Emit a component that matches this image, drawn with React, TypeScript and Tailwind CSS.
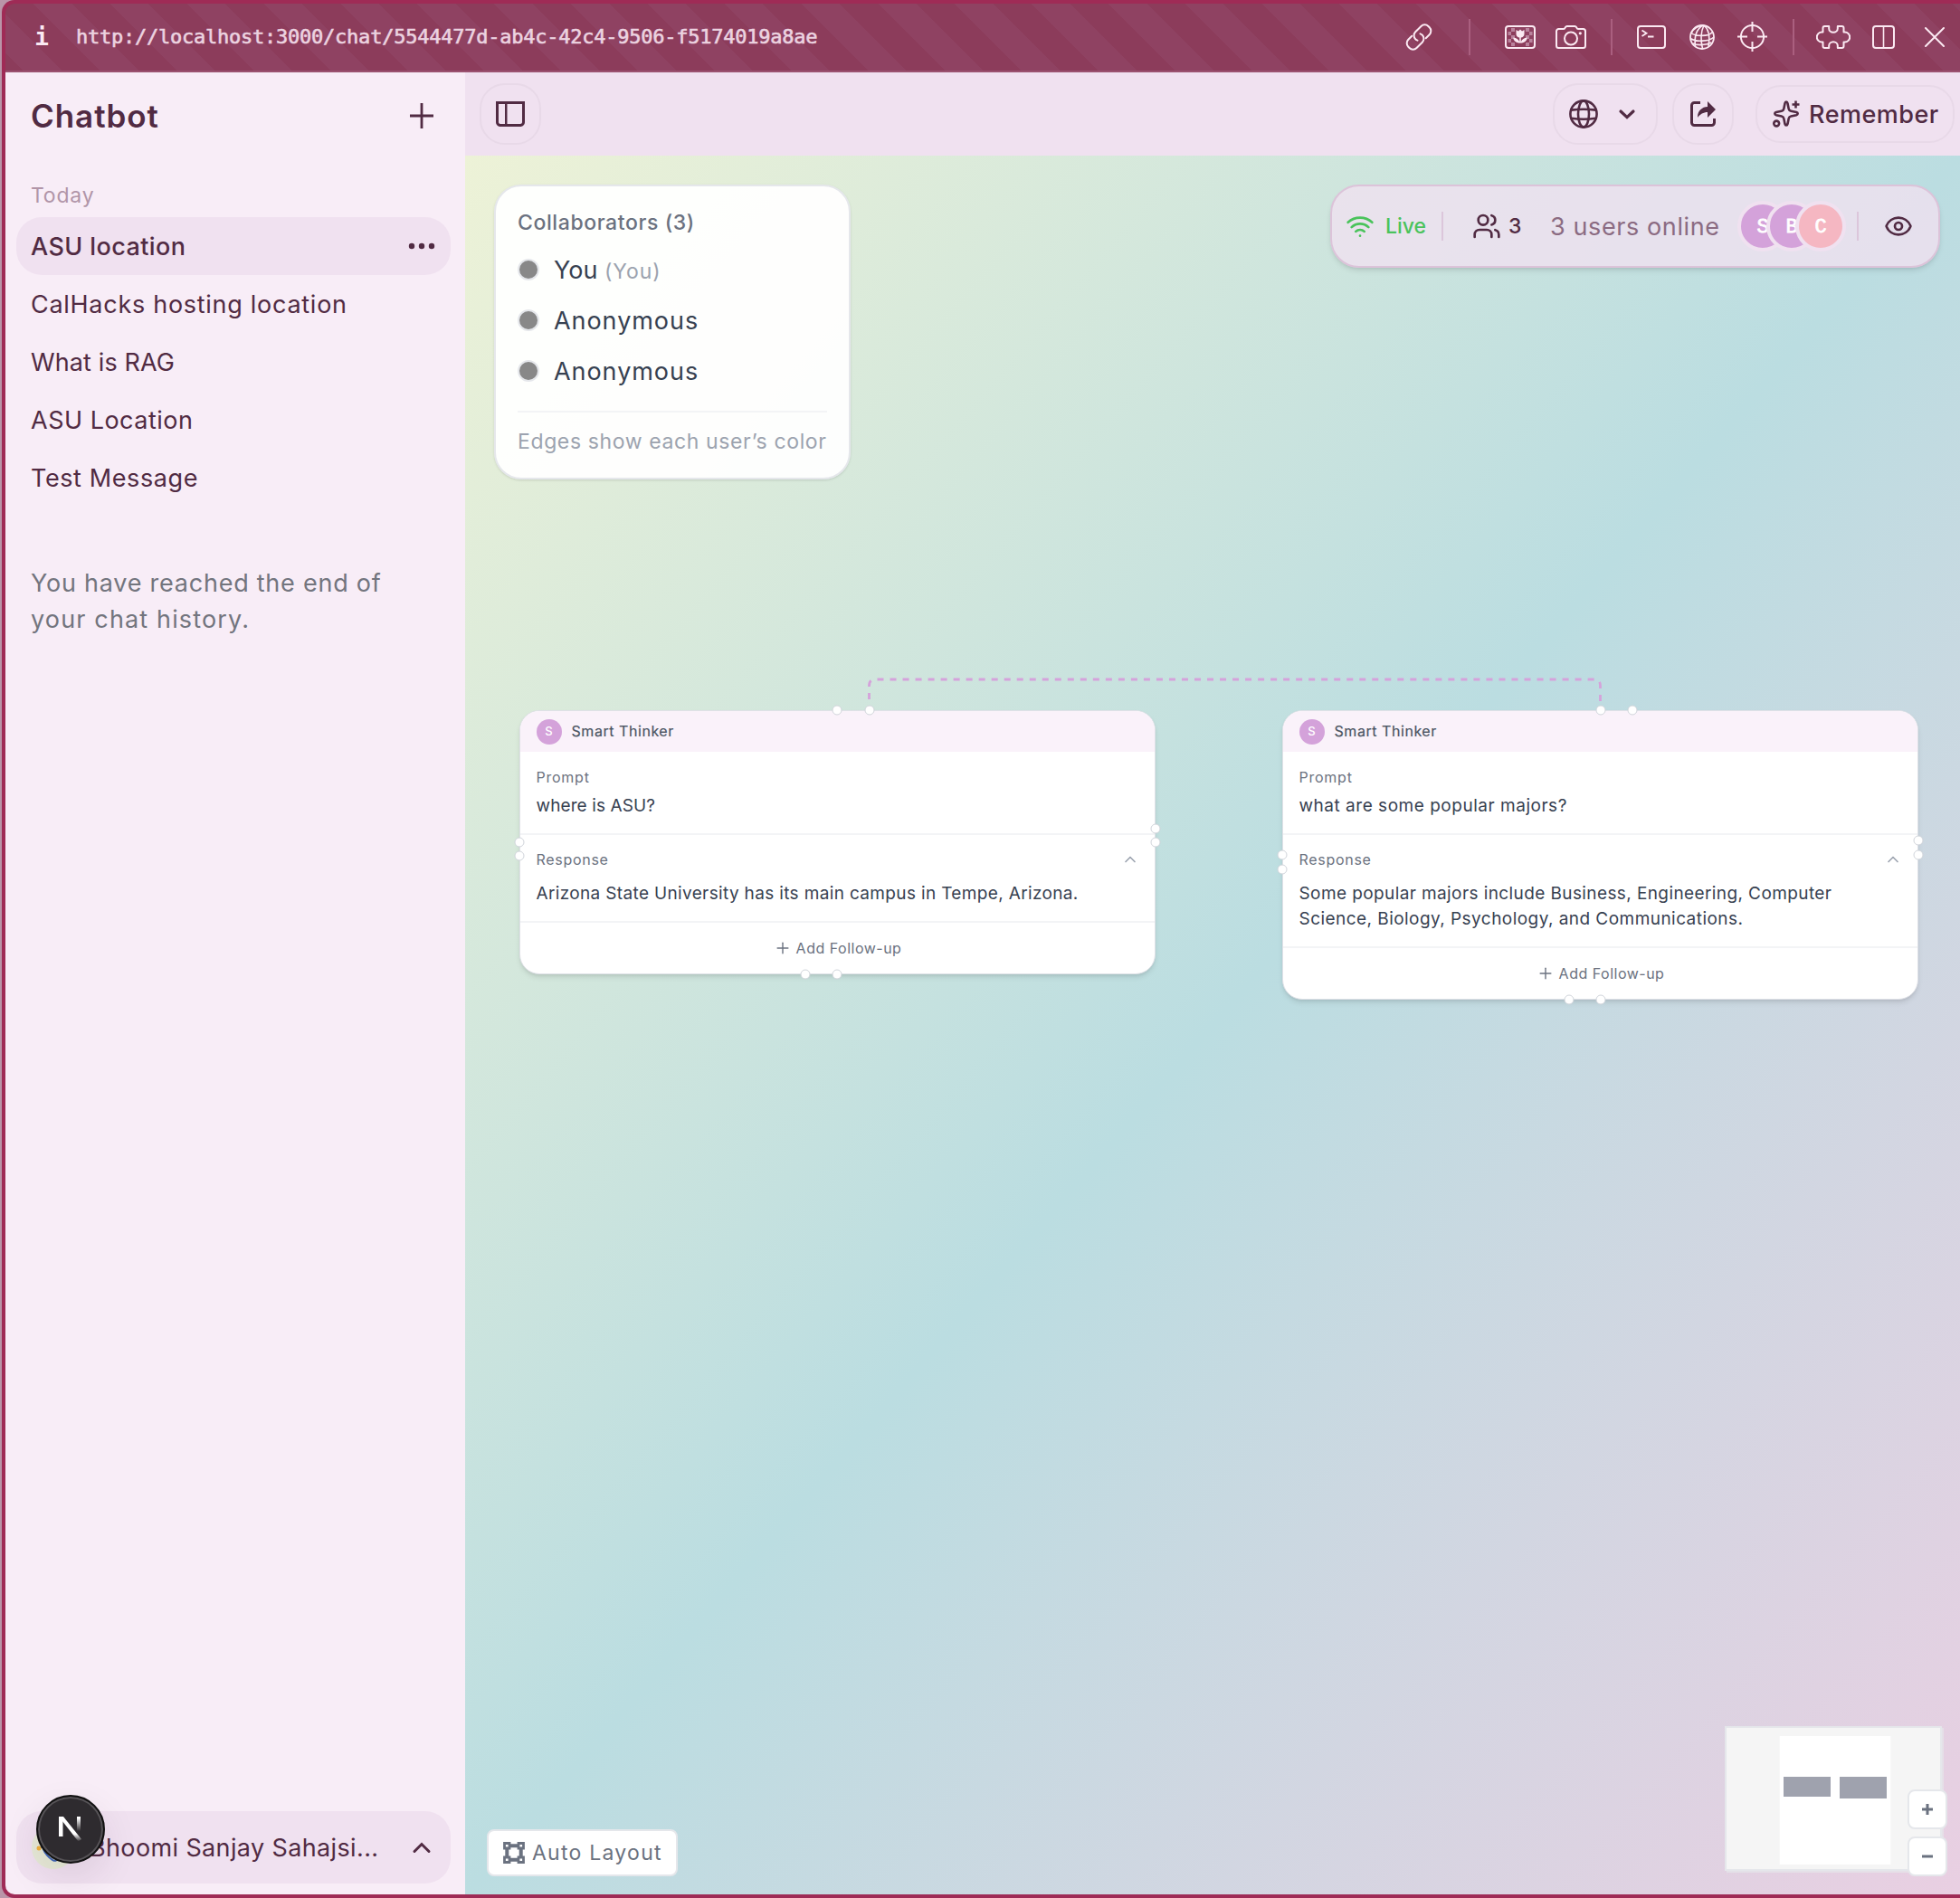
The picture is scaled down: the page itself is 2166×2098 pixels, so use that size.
import { useState } from 'react';
import type { ReactNode } from 'react';
import { ChevronUp, Eye, Plus, Users, Wifi } from 'lucide-react';

const chats = [
    { title: 'ASU location', tracking: 'tracking-[0.4px]' },
    { title: 'CalHacks hosting location', tracking: 'tracking-[0.72px]' },
    { title: 'What is RAG', tracking: 'tracking-[0.12px]' },
    { title: 'ASU Location', tracking: 'tracking-[0.5px]' },
    { title: 'Test Message', tracking: 'tracking-[0.6px]' },
];

const ToolDivider = ({ className }: { className: string }) => (
    <div className={`h-10 w-0.5 shrink-0 bg-[#aa5f7f] ${className}`}></div>
);

const BrowserBar = () => (
    <div className="flex h-[76px] shrink-0 items-center border-b-2 border-[#9b5270] bg-[repeating-linear-gradient(45deg,#8c3c5b_0px,#8c3c5b_14px,#8f4262_14px,#8f4262_44px,#8c3c5b_44px,#8c3c5b_60px)] pr-[17px] pb-px pl-[31px] text-[#fbe9f2]">
        <span className="w-[18px] text-center font-['DejaVu_Sans_Mono',monospace] text-[26px] leading-8 font-bold">i</span>
        <span className="ml-[29px] font-['DejaVu_Sans_Mono',monospace] text-[22px] leading-8 tracking-[-0.24px] whitespace-nowrap text-[#ecd3e0] [-webkit-text-stroke:0.6px_#ecd3e0]">
            http://localhost:3000/chat/5544477d-ab4c-42c4-9506-f5174019a8ae
        </span>

        {/* Link */}
        <svg className="ml-auto h-[30px] w-[30px] shrink-0" viewBox="0 0 30 30" fill="none" stroke="currentColor" strokeWidth={2} strokeLinecap="round">
            <path d="M13.5 18.6a6 6 0 0 1-2.3-1.4 5.6 5.6 0 0 1 0-7.9l6.3-6.3a5.6 5.6 0 0 1 7.9 0l1.3 1.3a5.6 5.6 0 0 1 0 7.9l-4 4" />
            <path d="M16.5 11.4a6 6 0 0 1 2.3 1.4 5.6 5.6 0 0 1 0 7.9L12.5 27a5.6 5.6 0 0 1-7.9 0l-1.3-1.3a5.6 5.6 0 0 1 0-7.9l4-4" />
        </svg>
        <ToolDivider className="ml-[40px]" />

        {/* Picture */}
        <svg className="ml-[38px] h-[26px] w-[34px] shrink-0" viewBox="0 0 34 26" fill="none">
            <path fill="#b9829c" d="M7 3h4v4H7zM3.500 7H7v4H3.500zM7 11h4v4H7zM3.500 15H7v4H3.500zM7 19h4v4H7zM23 3h4v4h-4zM27 7h3.500v4H27zM23 11h4v4h-4zM27 15h3.500v4H27zM23 19h4v4h-4z" />
            <rect x="1" y="1" width="32" height="24" rx="3" stroke="currentColor" strokeWidth={2} />
            <path fill="currentColor" d="M12.5 5l2.5 1.500L17 4.500l2 2L21.500 5v4.500c0 2.500-1.600 3.800-3.700 4v4.800c1-2.600 3.400-4.500 7-4.700-.3 3.300-2.500 5.500-6 6h-3.600c-3.500-.5-5.700-2.700-6-6 3.600.2 6 2.100 7 4.700v-4.800c-2.100-.2-3.700-1.500-3.700-4z" />
        </svg>

        {/* Camera */}
        <svg className="ml-[22px] h-[26px] w-[34px] shrink-0" viewBox="0 0 34 26" fill="none" stroke="currentColor" strokeWidth={2} strokeLinejoin="round">
            <path d="M3.500 4H9c1.200 0 1.500-1 2-2 .4-.7.9-1 1.700-1h8.600c.8 0 1.300.3 1.700 1 .5 1 .8 2 2 2h5.500A2.500 2.500 0 0 1 33 6.500v16a2.500 2.500 0 0 1-2.500 2.500h-27A2.500 2.500 0 0 1 1 22.500v-16A2.500 2.500 0 0 1 3.500 4z" />
            <circle cx="17" cy="14.5" r="7" />
            <circle cx="27.3" cy="8.8" r="1.6" fill="currentColor" stroke="none" />
        </svg>
        <ToolDivider className="ml-[27px]" />

        {/* Console */}
        <svg className="ml-[27px] h-[26px] w-[32px] shrink-0" viewBox="0 0 32 26" fill="none" stroke="currentColor" strokeWidth={2}>
            <rect x="1" y="1" width="30" height="24" rx="3" />
            <path d="M5.500 5.500l5 3.200-5 3.200M12 12.500h6.500" strokeWidth={1.8} />
        </svg>

        {/* Network */}
        <svg className="ml-[26px] h-[28px] w-[28px] shrink-0" viewBox="0 0 28 28" fill="none" stroke="currentColor" strokeWidth={1.6}>
            <circle cx="14" cy="14" r="13" strokeWidth={1.8} />
            <path d="M15 1C8 5 5 12 6.500 24M16 1c-3 6-4 15-1.500 26M16 1c5 4 7 12 5 23M16 1C10 1 4 5 2.500 9M2 9.500c4 3.500 19 4.500 23.500-1M1 15.500c6 4 21 3.500 26-1.500M3.500 21c6 2.500 15 2 21-1" />
        </svg>

        {/* Inspect */}
        <svg className="ml-[25px] h-[33px] w-[33px] shrink-0" viewBox="0 0 33 33" fill="none" stroke="currentColor" strokeWidth={2}>
            <circle cx="16.5" cy="16.5" r="12.6" />
            <path d="M16.500 0v11M16.500 22v11M0 16.500h11M22 16.500h11" />
        </svg>
        <ToolDivider className="ml-[28px]" />

        {/* Extensions */}
        <svg className="ml-[24px] h-[26px] w-[38px] shrink-0" viewBox="0 0 38 26" fill="none" stroke="currentColor" strokeWidth={2} strokeLinejoin="round">
            <path d="M9.500 1h4.700v2.500a4.800 4.300 0 0 0 9.600 0V1h4.700q2 0 2 2v4.500h1.200a5.500 5.500 0 0 1 0 11h-1.200V23q0 2-2 2h-4.700v-2.500a4.800 4.300 0 0 0-9.600 0V25H9.500q-2 0-2-2v-4.500H6.300a5.500 5.500 0 0 1 0-11h1.200V3q0-2 2-2z" />
        </svg>

        {/* Split view */}
        <svg className="ml-[24px] h-[26px] w-[25px] shrink-0" viewBox="0 0 25 26" fill="none" stroke="currentColor" strokeWidth={2}>
            <rect x="1" y="1" width="23" height="24" rx="3" />
            <path d="M12.500 1v24" strokeWidth={1.6} />
        </svg>

        {/* Close */}
        <svg className="ml-[33px] h-[22px] w-[22px] shrink-0" viewBox="0 0 22 22" fill="none" stroke="currentColor" strokeWidth={2} strokeLinecap="round">
            <path d="M1 1l20 20M21 1L1 21" />
        </svg>
    </div>
);

const Sidebar = () => {
    const [active, setActive] = useState(0);

    return (
        <aside className="flex w-[508px] shrink-0 flex-col bg-[#f8edf7] pr-4 pb-3 pl-3 text-[#512b43]">
            <div className="flex h-[96px] items-center justify-between pr-[19px] pl-4">
                <h1 className="text-[35px] leading-10 font-semibold tracking-[0.95px]">Chatbot</h1>
                <svg className="h-[28px] w-[26px]" viewBox="0 0 26 28" stroke="currentColor" strokeWidth={2.8}>
                    <path d="M13 0v28M0 14h26" />
                </svg>
            </div>

            <div className="mt-6 mb-2 flex h-8 items-center pl-4 text-[23px] tracking-[0.8px] text-[#b195a8]">Today</div>
            <nav className="flex flex-col">
                {chats.map((chat, index) => (
                    <button
                        key={index}
                        onClick={() => setActive(index)}
                        className={`flex h-16 items-center justify-between rounded-[28px] pr-4 pl-4 text-left text-[27px] ${active === index ? 'bg-[#f0e1f0] font-medium' : ''}`}
                    >
                        <span className={`pt-0.5 whitespace-nowrap ${chat.tracking}`}>{chat.title}</span>
                        {active === index && (
                            <svg className="h-8 w-8" viewBox="0 0 16 16" fill="currentColor">
                                <circle cx="2.5" cy="8" r="1.6" />
                                <circle cx="8" cy="8" r="1.6" />
                                <circle cx="13.5" cy="8" r="1.6" />
                            </svg>
                        )}
                    </button>
                ))}
            </nav>
            <p className="mt-[65px] pl-4 text-[27px] leading-[40px] whitespace-nowrap text-[#73757e]">
                <span className="tracking-[0.76px]">You have reached the end of</span><br />
                <span className="tracking-[1.15px]">your chat history.</span>
            </p>

            {/* Account */}
            <div className="relative mt-auto flex h-20 items-center rounded-[28px] bg-[#f0e1f0] pr-4 pl-[17px]">
                <div className="h-12 w-12 shrink-0 overflow-hidden rounded-full bg-[#e6ead6]">
                    <svg className="h-12 w-12" viewBox="0 0 48 48" fill="none" strokeWidth={2}>
                        <path d="M6 24h12M12 18l10 14" stroke="#3f66b5" />
                        <ellipse cx="20" cy="30" rx="11" ry="4" stroke="#3f66b5" transform="rotate(50 20 30)" />
                        <circle cx="8" cy="25" r="2.5" fill="#f0b23c" />
                    </svg>
                </div>
                <span className="ml-4 pt-0.5 text-[27px] tracking-[0.37px] whitespace-nowrap">Bhoomi Sanjay Sahajsi...</span>
                <svg className="ml-auto h-8 w-8" viewBox="0 0 32 32" fill="none" stroke="currentColor" strokeWidth={3} strokeLinecap="round">
                    <path d="M8 20.500L16 12.500l8 8" />
                </svg>

                {/* Dev tools badge */}
                <div className="absolute -top-[18px] left-[22px] flex h-[76px] w-[76px] items-center justify-center rounded-full border-2 border-[#111] bg-[#2e2b2f] shadow-[inset_0_0_0_2px_#565357,0_16px_40px_rgba(60,20,60,0.1)]">
                    <svg className="h-[28px] w-[26px]" viewBox="0 0 26 28" fill="none">
                        <defs>
                            <linearGradient id="stem" x1="0" y1="0" x2="0" y2="1">
                                <stop offset="0.1" stopColor="#fff" />
                                <stop offset="1" stopColor="#fff" stopOpacity="0" />
                            </linearGradient>
                            <linearGradient id="slash" x1="0" y1="0" x2="0" y2="1">
                                <stop offset="0.7" stopColor="#fff" />
                                <stop offset="1" stopColor="#fff" stopOpacity="0" />
                            </linearGradient>
                        </defs>
                        <path d="M0 0h4.500v22H0z" fill="#fff" />
                        <path d="M0 0h5l20 25-3.500 2.500z" fill="url(#slash)" />
                        <path d="M20 0h4v16h-4z" fill="url(#stem)" />
                    </svg>
                </div>
            </div>
        </aside>
    );
};

const TopBar = () => (
    <header className="flex h-[92px] shrink-0 items-center bg-[#f0e1f0] pr-[6px] pl-4 text-[#512b43]">
        <button className="flex h-[68px] w-[68px] items-center justify-center rounded-[28px] border-2 border-[#e8d9e8]">
            <svg className="h-8 w-8" viewBox="0 0 16 16" fill="currentColor" fillRule="evenodd">
                <path d="M6.245 2.5H14.5V12.5C14.5 13.0523 14.0523 13.5 13.5 13.5H6.245V2.5ZM4.995 2.5H1.5V12.5C1.5 13.0523 1.94772 13.5 2.5 13.5H4.995V2.5ZM0 1H1.5H14.5H16V2.5V12.5C16 13.8807 14.8807 15 13.5 15H2.5C1.11929 15 0 13.8807 0 12.5V2.5V1Z" />
            </svg>
        </button>

        <button className="ml-auto flex h-[68px] w-[116px] items-center justify-between rounded-[28px] border-2 border-[#e8d9e8] px-4">
            <svg className="h-8 w-8" viewBox="0 0 16 16" fill="none" stroke="currentColor" strokeWidth={1.3}>
                <circle cx="8" cy="8" r="7.3" />
                <ellipse cx="8" cy="8" rx="3" ry="7.3" />
                <path d="M1.200 5.800q6.800-.9 13.600 0M1.200 10.400q6.800.9 13.600 0" />
            </svg>
            <svg className="h-8 w-8" viewBox="0 0 16 16" fill="none" stroke="currentColor" strokeWidth={1.6}>
                <path d="M4.500 6.500L8 9.800l3.500-3.300" strokeLinecap="round" />
            </svg>
        </button>

        <button className="ml-4 flex h-[68px] w-[68px] items-center justify-center rounded-[28px] border-2 border-[#e8d9e8]">
            <svg className="h-8 w-8" viewBox="0 0 16 16" fill="currentColor" fillRule="evenodd">
                <path d="M15 11.25V10.5H13.5V11.25V12.75C13.5 13.1642 13.1642 13.5 12.75 13.5H3.25C2.83579 13.5 2.5 13.1642 2.5 12.75L2.5 3.25C2.5 2.83579 2.83579 2.5 3.25 2.5H5.75H6.5V1H5.75H3.25C2.00736 1 1 2.00736 1 3.25V12.75C1 13.9926 2.00736 15 3.25 15H12.75C13.9926 15 15 13.9926 15 12.75V11.25ZM15 5.5L10.5 1V4C7.46243 4 5 6.46243 5 9.5V10L5.05855 9.91218C6.27146 8.09281 8.31339 7 10.5 7V10L15 5.5Z" />
            </svg>
        </button>

        <button className="ml-6 flex h-[64px] w-[220px] items-center rounded-[28px] border-2 border-[#e8d9e8] pl-4">
            <svg className="h-8 w-8 shrink-0" viewBox="0 0 32 32" fill="none" stroke="currentColor" strokeWidth={2.6} strokeLinejoin="round">
                <path d="M16 2.500c1 0 1.300.8 1.500 1.800l1.200 6c.3 1.500 1 2.200 2.500 2.500l6 1.200c2 .5 2 2.700 0 3.200l-6 1.200c-1.500.3-2.200 1-2.500 2.500l-1.200 6c-.5 2.200-2.500 2.200-3 0l-1.200-6c-.3-1.500-1-2.200-2.500-2.500l-6-1.200c-2-.5-2-2.700 0-3.200l6-1.200c1.500-.3 2.200-1 2.500-2.500l1.200-6c.2-1 .5-1.800 1.500-1.800z" />
                <path d="M26.500 1.500v8M22.500 5.500h8" />
                <circle cx="5.2" cy="26.5" r="2.9" />
            </svg>
            <span className="ml-[9px] pt-0.5 text-[27px] font-medium tracking-[0.5px] whitespace-nowrap">Remember</span>
        </button>
    </header>
);

const CollaboratorDot = () => (
    <span className="h-6 w-6 rounded-full border-2 border-[#e5e7eb] bg-[#888888]"></span>
);

const Collaborators = () => (
    <div className="absolute top-8 left-8 w-[394px] rounded-[30px] border-2 border-[#e5e7eb] bg-white/95 p-6 shadow-sm">
        <h2 className="text-[23px] leading-8 font-medium tracking-[0.6px] whitespace-nowrap text-[#6b7280]">Collaborators (3)</h2>
        <ul className="mt-4 flex flex-col gap-4 text-[27px] leading-10 text-[#374151]">
            <li className="flex h-10 items-center gap-4">
                <CollaboratorDot />
                <span className="pt-0.5 whitespace-nowrap">You <span className="text-[23px] tracking-[0.9px] text-[#9ca3af]">(You)</span></span>
            </li>
            <li className="flex h-10 items-center gap-4">
                <CollaboratorDot />
                <span className="pt-0.5 tracking-[0.95px]">Anonymous</span>
            </li>
            <li className="flex h-10 items-center gap-4">
                <CollaboratorDot />
                <span className="pt-0.5 tracking-[0.95px]">Anonymous</span>
            </li>
        </ul>
        <p className="mt-6 border-t-2 border-[#f3f4f6] pt-4 text-[23px] leading-8 tracking-[0.62px] whitespace-nowrap text-[#9ca3af]">Edges show each user’s color</p>
    </div>
);

const StatusBar = () => (
    <div className="absolute top-8 right-[22px] flex h-[92px] w-[674px] items-center rounded-[32px] border-2 border-[#dcc3d9] bg-[#f0e1f0]/80 pl-[15px] text-[#512b43] shadow-md">
        <Wifi className="h-8 w-8 text-[#4ac35b]" strokeWidth={2} />
        <span className="ml-3 w-[46px] text-[23px] font-medium text-[#4ac35b]">Live</span>
        <div className="ml-4 h-8 w-0.5 bg-[#dcc6db]"></div>
        <Users className="ml-8 h-8 w-8" strokeWidth={2} />
        <span className="ml-2 w-4 text-[23px] font-medium">3</span>
        <span className="ml-[30px] w-[190px] pt-0.5 text-[27px] tracking-[0.6px] whitespace-nowrap text-[#8b6b82]">3 users online</span>
        <div className="ml-[17px] flex font-['Liberation_Mono',monospace] text-[22px] text-white [-webkit-text-stroke:0.8px_#ffffff]">
            <div className="flex h-14 w-14 items-center justify-center rounded-full border-4 border-[#f0e1f0] bg-[#d4a2da] pt-0.5">S</div>
            <div className="-ml-6 flex h-14 w-14 items-center justify-center rounded-full border-4 border-[#f0e1f0] bg-[#d4a2da] pt-0.5">B</div>
            <div className="-ml-6 flex h-14 w-14 items-center justify-center rounded-full border-4 border-[#f0e1f0] bg-[#f5b7c2] pt-0.5">C</div>
        </div>
        <div className="ml-3 h-8 w-0.5 bg-[#dcc6db]"></div>
        <Eye className="ml-[28px] h-8 w-8" strokeWidth={2} />
    </div>
);

const Handle = ({ className }: { className: string }) => (
    <span className={`absolute h-[11px] w-[11px] -translate-x-1/2 -translate-y-1/2 rounded-full border-[1.4px] border-[#d1d5db] bg-white ${className}`}></span>
);

type NodeProps = { prompt: string; promptTracking: string; children: ReactNode; handles: ReactNode; className: string };

const ChatNode = ({ prompt, promptTracking, children, handles, className }: NodeProps) => (
    <div className={`absolute w-[703px] ${className}`}>
        <div className="overflow-hidden rounded-[22px] border border-[#dfe1e7] bg-white shadow-md">
            <div className="flex h-[45px] items-center bg-[#faf2fa] pl-[17.5px]">
                <span className="flex h-7 w-7 items-center justify-center rounded-full bg-[#d4a2da] text-[13px] font-medium text-white">S</span>
                <span className="ml-[11px] pb-0.5 text-[16px] tracking-[0.55px] text-[#4b5563] [-webkit-text-stroke:0.2px_#4b5563]">Smart Thinker</span>
            </div>
            <div className="h-[92px] border-b-2 border-[#f3f4f6] px-[17.5px] pt-4">
                <div className="text-[16px] leading-[24px] tracking-[0.75px] text-[#6b7280]">Prompt</div>
                <div className={`mt-[6px] text-[19px] leading-[28px] text-[#374151] ${promptTracking}`}>{prompt}</div>
            </div>
            <div className="border-b-2 border-[#f3f4f6] px-[17.5px] pt-[14px] pb-[16px]">
                <div className="flex h-[26px] items-center justify-between text-[16px] tracking-[0.7px] text-[#6b7280]">
                    Response
                    <ChevronUp className="h-5 w-5 text-[#9ca3af]" strokeWidth={2} />
                </div>
                <div className="mt-[11px] text-[19px] leading-[28px] text-[#374151]">{children}</div>
            </div>
            <div className="flex h-[56px] items-center justify-center gap-[5px] pb-px text-[16px] tracking-[0.5px] text-[#6b7280]">
                <Plus className="h-5 w-5" strokeWidth={1.7} />
                Add Follow-up
            </div>
        </div>
        {handles}
    </div>
);

const MiniMap = () => (
    <svg className="absolute right-[18px] bottom-[24px] h-[162px] w-[242px]" viewBox="0 0 242 162">
        <path d="M0 0h240v160H0z" fill="#e5e7eb" />
        <path d="M2 2h240v160H2z" fill="#e5e7eb" fillOpacity="0.7" />
        <path d="M2 2h236v156H2z" fill="#f5f5f5" />
        <path d="M60.7 11h122.600v142H60.7z" fill="#ffffff" />
        <path d="M65 56h52v22H65zM127 56h52v24h-52z" fill="#9fa2ae" />
    </svg>
);

const Canvas = () => (
    <section className="relative flex-1 overflow-hidden bg-[linear-gradient(to_bottom_right,#edf2d7,#bbdde1,#e9cfe2)]">
        <svg className="absolute top-0 left-0 h-full w-full" fill="none">
            <path
                d="M446.500 615V586q0-7 7-7H1247.500q7 0 7 7V612"
                stroke="#d5a2db"
                strokeWidth={2.8}
                strokeDasharray="7 7.02"
            />
        </svg>

        <ChatNode
            className="top-[613px] left-[60px]"
            prompt="where is ASU?"
            promptTracking="tracking-[0.1px]"
            handles={
                <>
                    <Handle className="top-0 left-[351px]" />
                    <Handle className="top-0 left-[386.5px]" />
                    <Handle className="top-[146px] left-0" />
                    <Handle className="top-[161px] left-0" />
                    <Handle className="top-[131px] left-full" />
                    <Handle className="top-[146px] left-full" />
                    <Handle className="top-full left-[316px]" />
                    <Handle className="top-full left-[351px]" />
                </>
            }
        >
            <span className="tracking-[0.35px] whitespace-nowrap">Arizona State University has its main campus in Tempe, Arizona.</span>
        </ChatNode>

        <ChatNode
            className="top-[613px] left-[903px]"
            prompt="what are some popular majors?"
            promptTracking="tracking-[0.52px]"
            handles={
                <>
                    <Handle className="top-0 left-[351.5px]" />
                    <Handle className="top-0 left-[386.5px]" />
                    <Handle className="top-[160px] left-0" />
                    <Handle className="top-[176px] left-0" />
                    <Handle className="top-[144px] left-full" />
                    <Handle className="top-[160px] left-full" />
                    <Handle className="top-full left-[316.5px]" />
                    <Handle className="top-full left-[351.5px]" />
                </>
            }
        >
            <span className="tracking-[0.4px] whitespace-nowrap">Some popular majors include Business, Engineering, Computer</span><br />
            <span className="tracking-[0.45px] whitespace-nowrap">Science, Biology, Psychology, and Communications.</span>
        </ChatNode>

        <Collaborators />
        <StatusBar />

        <button className="absolute bottom-5 left-6 flex h-[52px] w-[211px] items-center rounded-lg border-2 border-[#e5e7eb] bg-white pl-4 text-[#6b7280]">
            <svg className="h-6 w-6 shrink-0" viewBox="0 0 24 24" fill="none" stroke="currentColor" strokeWidth={2.8}>
                <path d="M1.500 1.500h5.500v5.500H1.500zM17 1.500h5.500v5.500H17zM1.500 17h5.500v5.500H1.500zM17 17h5.500v5.500H17z" />
                <path d="M8 4.300h8M8 19.700h8M4.300 8v8M19.700 8v8" strokeWidth={4} />
            </svg>
            <span className="ml-2 text-[23px] tracking-[1.25px] whitespace-nowrap">Auto Layout</span>
        </button>

        <MiniMap />
        <div className="absolute right-[14px] bottom-5 flex flex-col gap-2">
            <button className="flex h-11 w-11 items-center justify-center rounded-lg border-2 border-[#e5e7eb] bg-white text-[#6b7280]">
                <svg className="h-3 w-3" viewBox="0 0 12 12" stroke="currentColor" strokeWidth={3}>
                    <path d="M6 0v12M0 6h12" />
                </svg>
            </button>
            <button className="flex h-11 w-11 items-center justify-center rounded-lg border-2 border-[#e5e7eb] bg-white text-[#6b7280]">
                <svg className="h-3 w-3" viewBox="0 0 12 12" stroke="currentColor" strokeWidth={3}>
                    <path d="M0 6h12" />
                </svg>
            </button>
        </div>
    </section>
);

const App = () => (
    <div className="h-[2098px] w-[2166px] overflow-hidden bg-[#b995a8] pl-0.5 font-['Inter',sans-serif]">
        <div className="flex h-full flex-col overflow-hidden rounded-l-[14px] border-y-4 border-l-4 border-[#9f2b56] bg-[#9f2b56]">
            <BrowserBar />
            <div className="flex min-h-0 flex-1">
                <Sidebar />
                <main className="flex min-w-0 flex-1 flex-col">
                    <TopBar />
                    <Canvas />
                </main>
            </div>
        </div>
    </div>
);

export default App;
